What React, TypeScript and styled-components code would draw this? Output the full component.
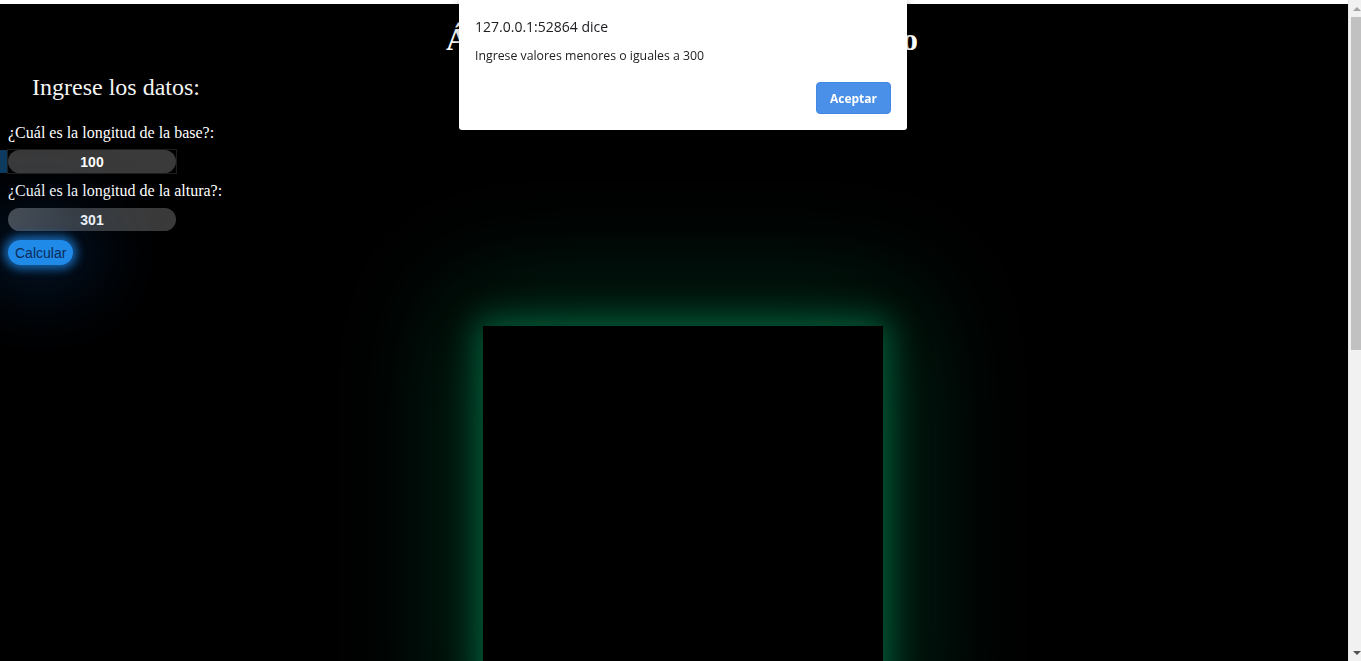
import React from 'react'
import styled, { createGlobalStyle } from 'styled-components'

const GlobalStyle = createGlobalStyle`
  html, body {
    margin: 0;
    padding: 0;
    background: #000;
    overflow: hidden;
  }
`

export default function App() {
  return (
    <>
      <GlobalStyle />
      <Frame>
        <Page>
          <Title>Área y perímetro de un rectángulo</Title>
          <Stage>
            <Form>
              <FormTitle>Ingrese los datos:</FormTitle>
              <Label>¿Cuál es la longitud de la base?:</Label>
              <InputFrame $active>
                <Input defaultValue="100" />
              </InputFrame>
              <Label>¿Cuál es la longitud de la altura?:</Label>
              <InputFrame>
                <Input $hovered defaultValue="301" />
              </InputFrame>
              <Button>Calcular</Button>
            </Form>
            <Drawing />
          </Stage>
        </Page>
        <Scrollbar>
          <Arrow $dir="up" />
          <Thumb />
          <Track />
          <Arrow $dir="down" />
        </Scrollbar>
      </Frame>
      <Dialog>
        <DialogTitle>127.0.0.1:52864 dice</DialogTitle>
        <DialogText>Ingrese valores menores o iguales a 300</DialogText>
        <DialogActions>
          <DialogButton>Aceptar</DialogButton>
        </DialogActions>
      </Dialog>
    </>
  )
}

const Frame = styled.div`
  display: flex;
  height: 100vh;
  overflow: hidden;
`
const Page = styled.div`
  flex: 1;
  background: #000;
  border-top: 4px solid #fff;
  padding: 0 8px;
  overflow: hidden;
  font-family: "Liberation Serif", "Times New Roman", serif;
  color: #fff;
`
const Title = styled.h1`
  margin: 17px 0 0 0;
  padding-left: 16px;
  text-align: center;
  font-size: 32px;
  font-weight: bold;
  line-height: 37px;
  white-space: nowrap;
`
const Stage = styled.div`
  display: grid;
  grid-template-columns: 1fr;
  align-items: start;
`
const Form = styled.div`
  grid-area: 1 / 1;
  justify-self: start;
  width: 216px;
  display: flex;
  flex-direction: column;
  align-items: flex-start;
  padding-top: 15px;
  position: relative;
  z-index: 1;
`
const FormTitle = styled.h2`
  align-self: stretch;
  margin: 0 0 23px 0;
  text-align: center;
  font-size: 24px;
  font-weight: normal;
  line-height: 28px;
  color: #f4f4f4;
`
const Label = styled.label`
  font-size: 16px;
  line-height: 18px;
  margin-bottom: 8px;
  white-space: nowrap;
`
const InputFrame = styled.div<{ $active?: boolean }>`
  display: flex;
  margin-bottom: 9px;
  outline: 1px solid ${p => (p.$active ? '#1e1e1e' : 'transparent')};
  box-shadow: ${p => (p.$active ? '-8px 0 0 #0e3b5e' : 'none')};
`
const Input = styled.input<{ $hovered?: boolean }>`
  width: 168px;
  height: 23px;
  box-sizing: border-box;
  border: none;
  border-radius: 12px;
  background: ${p =>
    p.$hovered
      ? 'linear-gradient(90deg, #4d4d4d 0%, #3c3c3c 40%, #3a3a3a 100%)'
      : '#3a3a3a'};
  color: #fff;
  font-family: "Liberation Sans", Arial, sans-serif;
  font-size: 14px;
  font-weight: bold;
  text-align: center;
  outline: none;
  padding: 0;
`
const Button = styled.button`
  height: 25px;
  padding: 0 7px;
  border: none;
  border-radius: 13px;
  background: #1f8ae8;
  color: #0b2a58;
  font-family: "Liberation Sans", Arial, sans-serif;
  font-size: 14px;
  box-shadow: 0 0 10px 4px rgba(30, 140, 240, 0.7),
    0 0 70px 30px rgba(15, 80, 160, 0.25);
`
const Drawing = styled.div`
  grid-area: 1 / 1;
  justify-self: center;
  margin: 268px 0 0 18px;
  width: 400px;
  height: 400px;
  background: #000;
  box-shadow: 0 0 30px 6px rgba(0, 155, 95, 0.5),
    0 0 110px 30px rgba(0, 130, 80, 0.35);
`
const Scrollbar = styled.div`
  width: 12px;
  background: #f1f1f1;
  border-left: 1px solid #e6e6e6;
  display: flex;
  flex-direction: column;
`
const Arrow = styled.div<{ $dir: 'up' | 'down' }>`
  height: 17px;
  display: flex;
  align-items: center;
  justify-content: center;
  &::before {
    content: '';
    border-left: 4px solid transparent;
    border-right: 4px solid transparent;
    ${p =>
      p.$dir === 'up'
        ? 'border-bottom: 4px solid #a3a3a3; margin-left: 4px;'
        : 'border-top: 4px solid #505050; margin-left: 4px;'}
  }
`
const Thumb = styled.div`
  height: 333px;
  margin-left: 2px;
  background: #c1c1c1;
`
const Track = styled.div`
  flex: 1;
`
const Dialog = styled.div`
  position: fixed;
  top: 0;
  left: 459px;
  width: 448px;
  height: 130px;
  box-sizing: border-box;
  padding: 17px 16px 0 16px;
  background: #fff;
  border-radius: 0 0 3px 3px;
  box-shadow: 0 2px 8px rgba(0, 0, 0, 0.35);
  font-family: "Open Sans", "Noto Sans", sans-serif;
  display: flex;
  flex-direction: column;
`
const DialogTitle = styled.div`
  font-size: 14px;
  line-height: 20px;
  color: #202124;
`
const DialogText = styled.div`
  margin-top: 11px;
  font-size: 12.3px;
  line-height: 16px;
  color: #202124;
`
const DialogActions = styled.div`
  display: flex;
  justify-content: flex-end;
  margin-top: 18px;
`
const DialogButton = styled.button`
  width: 75px;
  height: 32px;
  border: 1px solid #4287e3;
  border-radius: 4px;
  background: #4a8fe8;
  color: #fff;
  font-family: "Open Sans", "Noto Sans", sans-serif;
  font-size: 12px;
  font-weight: bold;
`
